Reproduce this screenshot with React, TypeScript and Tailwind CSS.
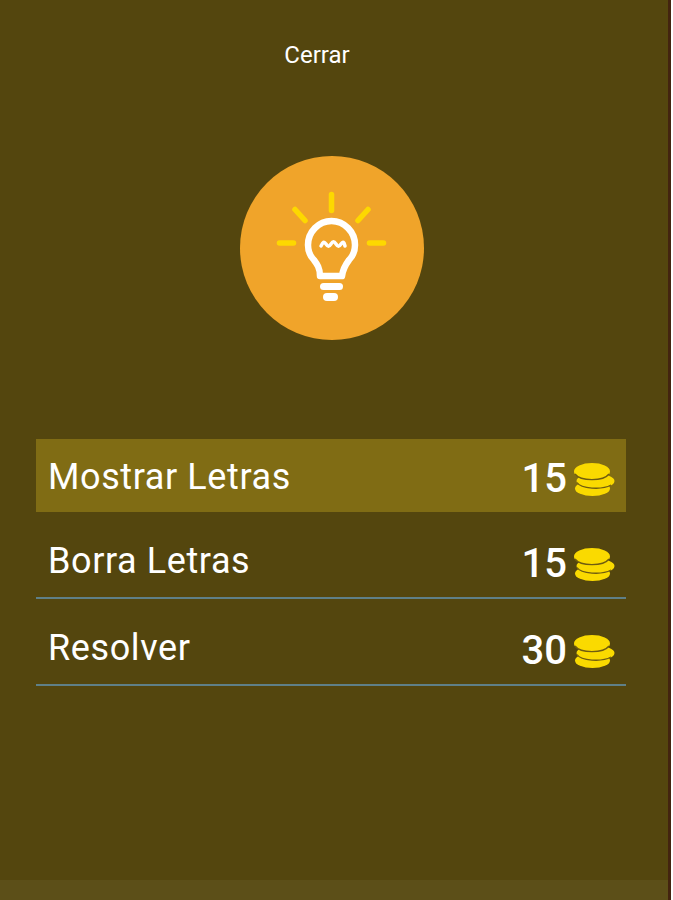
const options = [
  { label: "Mostrar Letras", cost: 15, active: true },
  { label: "Borra Letras", cost: 15, active: false },
  { label: "Resolver", cost: 30, active: false },
];

const Coins = () => (
  <svg width="41" height="35" viewBox="0 0 41 35" className="ml-[7px] mt-[3px]">
    <ellipse cx="18.500" cy="25.500" rx="17.500" ry="7.500" fill="#fada00" />
    <ellipse cx="21.500" cy="18" rx="19" ry="7.500" fill="#fada00" />
    <path d="M3 19.500A19 7.500 0 0 0 37 22" fill="none" stroke="#6f5c10" strokeWidth="1.300" />
    <ellipse cx="18" cy="8.500" rx="18" ry="8.500" fill="#fada00" />
    <path d="M1 11A18 8.500 0 0 0 35 11" fill="none" stroke="#6f5c10" strokeWidth="1.300" />
  </svg>
);

const Bulb = () => (
  <svg width="110" height="110" viewBox="0 0 110 110" className="overflow-visible">
    <g stroke="#fdd800" strokeWidth="5.500" strokeLinecap="round">
      <path d="M54.500 1.500v16" />
      <path d="M18 16.500l10 11" />
      <path d="M91 16.500L81 27.500" />
      <path d="M2.500 50h14" />
      <path d="M92.500 50h14" />
    </g>
    <path
      d="M43 83c0-8-3-12-6-16-3-3-6-9-6-15 0-13 10.500-24 23.500-24S78 39 78 52c0 6-3 12-6 15-3 4-6 8-7 16z"
      fill="none"
      stroke="#fff"
      strokeWidth="6.500"
      strokeLinejoin="round"
    />
    <path d="M44 53c2-4 3-5 5-2s3 3 5 0 3-3 5 0 3 3 5 0 3-2 4 2" fill="none" stroke="#fff" strokeWidth="3.500" strokeLinecap="round" />
    <path d="M46.500 93.500h16" stroke="#fff" strokeWidth="7" strokeLinecap="round" />
    <path d="M50 104h7" stroke="#fff" strokeWidth="8" strokeLinecap="round" />
  </svg>
);

export default function App() {
  return (
    <div className="h-[900px] w-[673px] bg-white font-['Roboto',sans-serif] overflow-hidden">
      <div className="flex h-full w-[671px] border-r-[3px] border-[#43240f] flex-col bg-[#54460e]">
        <div className="flex-1 flex flex-col items-center">
          <div className="mt-[41px] h-[28px] w-full pr-[34px] text-center text-[24px] leading-[28px] text-white">Cerrar</div>
          <div className="mt-[87px] mr-[4px] flex h-[184px] w-[184px] items-center justify-center rounded-full bg-[#f0a42a]">
            <Bulb />
          </div>
          <div className="mt-[99px] mr-[6px] w-[590px]">
            {options.map((item) => (
              <div
                key={item.label}
                className={
                  item.active
                    ? "flex h-[73px] items-center justify-between bg-[#806c14] pl-[12px] pr-[11px] pt-[2px]"
                    : "flex h-[87px] items-center justify-between border-b-2 border-[#5f8088] pl-[12px] pr-[11px] pt-[13px]"
                }
              >
                <span className="text-[36px] tracking-[0.6px] text-white">{item.label}</span>
                <span className="flex items-center pt-[5px]">
                  <span className="text-[40px] font-medium text-white">{item.cost}</span>
                  <Coins />
                </span>
              </div>
            ))}
          </div>
        </div>
        <div className="h-[20px] bg-[#5c4f18]" />
      </div>
    </div>
  );
}
